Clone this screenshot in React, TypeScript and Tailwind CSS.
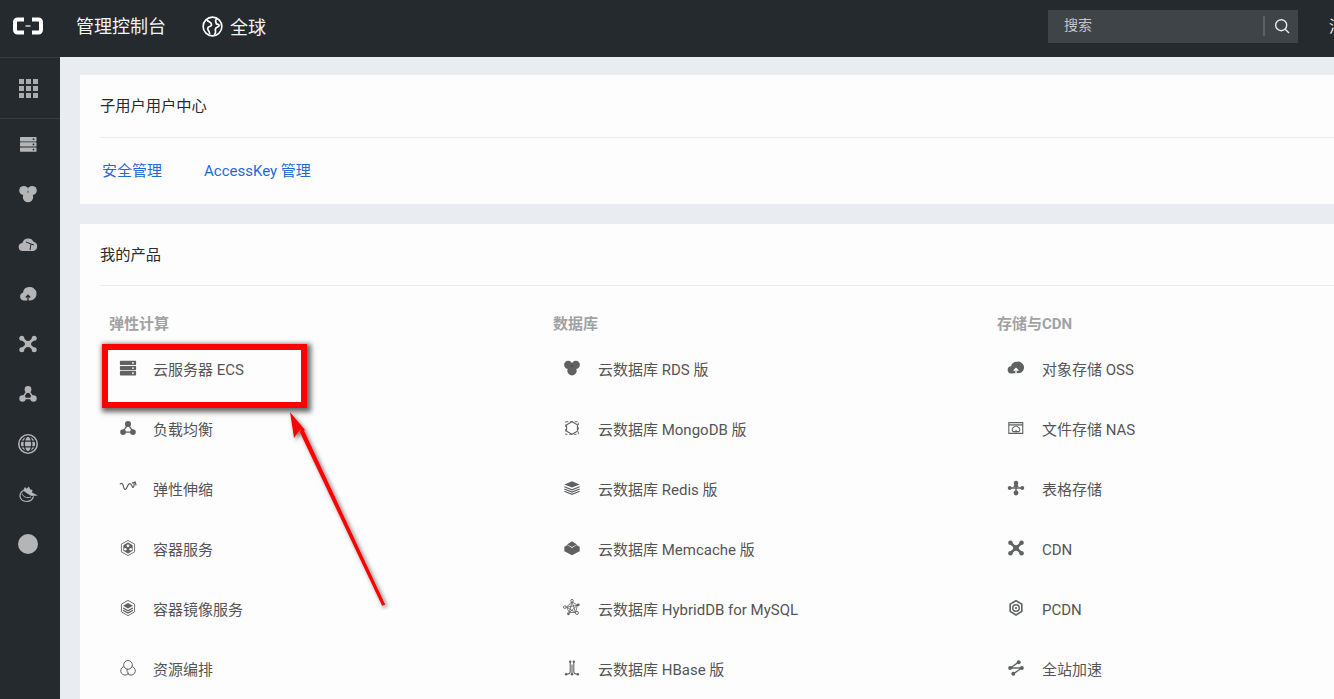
import type { ReactNode } from "react";

const font = { fontFamily: 'Roboto, "Noto Sans CJK SC", sans-serif' };

function Ico({ children, className = "w-[20px] h-[20px]" }: { children: ReactNode; className?: string }) {
    return (
        <svg viewBox="0 0 20 20" className={className} fill="currentColor">
            {children}
        </svg>
    );
}

const Server = () => (
    <>
        <rect x="1" y="2" width="18" height="4.800" rx="0.800" />
        <rect x="1" y="7.700" width="18" height="4.800" rx="0.800" />
        <rect x="1" y="13.400" width="18" height="4.800" rx="0.800" />
        <circle cx="15.500" cy="4.400" r="1" fill="#fff" />
        <circle cx="15.500" cy="10.100" r="1" fill="#fff" />
        <circle cx="15.500" cy="15.800" r="1" fill="#fff" />
    </>
);
const ServerDark = () => (
    <>
        <rect x="2" y="3" width="16.500" height="4.400" rx="0.600" />
        <rect x="2" y="8.200" width="16.500" height="4.400" rx="0.600" />
        <rect x="2" y="13.400" width="16.500" height="4.400" rx="0.600" />
        <circle cx="15.500" cy="5.200" r="0.900" fill="#252a2f" />
        <circle cx="15.500" cy="10.400" r="0.900" fill="#252a2f" />
        <circle cx="15.500" cy="15.600" r="0.900" fill="#252a2f" />
    </>
);
const Trefoil = () => (
    <>
        <circle cx="5.800" cy="6.500" r="4.600" />
        <circle cx="14.200" cy="6.500" r="4.600" />
        <circle cx="10" cy="13" r="5.200" />
        <path d="M10 6l1.200 2.500H8.800z" fill="#252a2f" opacity="0.500" />
    </>
);
const CloudNet = ({ hole = "#252a2f" }: { hole?: string }) => (
    <>
        <path d="M5 17a4 4 0 0 1-.6-8 6 6 0 0 1 11.200-1.200a4.700 4.700 0 0 1-.4 9.200z" />
        <path d="M8 8l5 2 3 1M13 10l-1 6" stroke={hole} strokeWidth="1" fill="none" />
    </>
);
const CloudUp = ({ hole = "#252a2f" }: { hole?: string }) => (
    <>
        <path d="M5.500 16.500a4 4 0 0 1-.5-7.800 6.500 6.500 0 0 1 6-5.700 6.500 6.500 0 0 1 1.500 13.500z" />
        <path d="M10 17v-5M7.800 13.500L10 11.200l2.200 2.300" stroke={hole} strokeWidth="1.300" fill="none" />
    </>
);
const Cross = () => (
    <>
        <path d="M4 4.500l12 11M16 4.500l-12 11" stroke="currentColor" strokeWidth="2.800" />
        <circle cx="3.800" cy="4.300" r="2.500" />
        <circle cx="16.200" cy="4.300" r="2.500" />
        <circle cx="3.800" cy="15.700" r="2.500" />
        <circle cx="16.200" cy="15.700" r="2.500" />
        <circle cx="10" cy="10" r="3.200" />
    </>
);
const Balance = () => (
    <>
        <path d="M10 6L4 14.500h12z" fill="none" stroke="currentColor" strokeWidth="1.500" />
        <circle cx="10" cy="5.500" r="3.400" />
        <circle cx="4.500" cy="14.500" r="3.200" />
        <circle cx="15.500" cy="14.500" r="3.200" />
    </>
);
const Globe = () => (
    <>
        <circle cx="10" cy="10" r="10" />
        <g fill="none" stroke="#252a2f" strokeWidth="1.300">
            <circle cx="10" cy="10" r="7.800" />
            <ellipse cx="10" cy="10" rx="3.800" ry="7.800" />
            <path d="M2.500 7.200h15M2.500 12.800h15" />
        </g>
    </>
);
const Bird = () => (
    <g>
        <path d="M15.500 12.500c-1 3.500-4 5-7 5-4 0-6.500-2.500-6.500-5.500 0-2.500 1.500-4.500 3.500-5.500" fill="none" stroke="currentColor" strokeWidth="1.200" />
        <path d="M4 9.500c1 3.500 5 5 9 3.500" fill="none" stroke="currentColor" strokeWidth="1" />
        <path d="M5 6.500L7 3l1.500 1.800L11 2.500l1 2.800L14.500 6l-.5 2.500 6 3-6.500.500-3.500-2z" />
    </g>
);
const Scale = () => (
    <path
        d="M1 6c2.500-2.500 3.500 0 4 2.500s2 4.500 3.500 1.500S11 4 13 5.500s1.500 5 3 3.500.5-4 1-4.500M14.500 4.500l3.500-1 1 3.500"
        fill="none"
        stroke="currentColor"
        strokeWidth="1.400"
    />
);
const Hexagon = ({ children }: { children: ReactNode }) => (
    <>
        <path d="M10 1.500l7.300 4.200v8.600L10 18.500l-7.300-4.200V5.700z" fill="none" stroke="currentColor" strokeWidth="1" />
        {children}
    </>
);
const Box = () => (
    <Hexagon>
        <path d="M10 4l5.200 3v6L10 16l-5.200-3V7z" />
        <circle cx="10" cy="7.500" r="1.500" fill="#fff" />
        <circle cx="7" cy="11.500" r="1.400" fill="#fff" />
        <circle cx="13" cy="11.500" r="1.400" fill="#fff" />
    </Hexagon>
);
const BoxStack = () => (
    <Hexagon>
        <path d="M10 4.500l5.500 3L10 10.500l-5.500-3z" />
        <path d="M4.500 10L10 13l5.500-3M4.500 12.500l5.500 3 5.500-3" fill="none" stroke="currentColor" strokeWidth="1.400" />
    </Hexagon>
);
const Rings = () => (
    <g fill="none" stroke="currentColor" strokeWidth="1.100">
        <circle cx="10" cy="6.500" r="4.800" />
        <path d="M5.300 8.500a4.800 4.800 0 1 0 5.200 7.500 5 5 0 0 1-1.500-5" />
        <path d="M14.700 8.500a4.800 4.800 0 1 1-5.200 7.500" />
    </g>
);
const Mongo = () => (
    <>
        <path d="M3 3h14v14H3z" fill="none" stroke="currentColor" strokeWidth="1" strokeDasharray="3 2" />
        <path d="M10 3l6 3.500v7L10 17l-6-3.500v-7z" fill="#fdfdfe" stroke="currentColor" strokeWidth="1.200" />
    </>
);
const Layers = () => (
    <>
        <path d="M10 2.500l8.500 3.500L10 9.500 1.500 6z" />
        <path
            d="M1.500 8.500l8.500 3.500 8.500-3.500M1.500 11l8.500 3.500 8.500-3.500M1.500 13.500L10 17l8.500-3.500"
            fill="none"
            stroke="currentColor"
            strokeWidth="1.200"
        />
    </>
);
const Memcache = () => (
    <>
        <path d="M10 2.500l5.500 3.500L10 9 4.500 6z" />
        <path d="M1.500 8.500L5 6.800 10 10l5-3.200 3.500 1.700v5L10 18l-8.500-4.500z" />
    </>
);
const Hybrid = () => (
    <g>
        <path d="M10 3l6 4-2 8-7 0-3-6zM7 15l3-12 4 12L4 9l12-2z" fill="none" stroke="currentColor" strokeWidth="0.900" />
        <circle cx="10" cy="2" r="1.500" fill="#fdfdfe" stroke="currentColor" />
        <circle cx="17" cy="6.500" r="1.600" />
        <circle cx="15.500" cy="15.500" r="1.700" fill="#fdfdfe" stroke="currentColor" />
        <circle cx="6" cy="16.500" r="1.500" />
        <circle cx="2" cy="9" r="1.500" fill="#fdfdfe" stroke="currentColor" />
    </g>
);
const HBase = () => (
    <g>
        <path
            d="M8 3v11c0 2-1.500 3-4 3M12 3v11c0 2 1.500 3 4 3M10 6v11"
            fill="none"
            stroke="currentColor"
            strokeWidth="1.200"
        />
        <circle cx="8" cy="3" r="1.300" />
        <circle cx="12" cy="3" r="1.300" />
        <circle cx="3.500" cy="17" r="1.400" />
        <circle cx="10" cy="17" r="1.400" />
        <circle cx="16.500" cy="17" r="1.400" />
    </g>
);
const Oss = () => (
    <>
        <path d="M5 16a4 4 0 0 1-.5-8 6.500 6.500 0 0 1 6.500-5 6.500 6.500 0 0 1 3.500 12.500z" />
        <path d="M10 16v-5M7.500 13L10 10.500 12.500 13" stroke="#fff" strokeWidth="1.500" fill="none" />
    </>
);
const Nas = () => (
    <>
        <path d="M2 4h15.500v12H2zM2 6.500h15.500" fill="none" stroke="currentColor" strokeWidth="1.200" />
        <path d="M7 14a2.500 2.500 0 0 1 .3-4.500 3 3 0 0 1 5.400 0A2.500 2.500 0 0 1 13 14z" fill="none" stroke="currentColor" strokeWidth="1.200" />
        <path d="M10 15v-3" stroke="currentColor" strokeWidth="1.200" />
    </>
);
const Table = () => (
    <>
        <path d="M10 4v12M3 10h14" stroke="currentColor" strokeWidth="1.500" />
        <path d="M10 3l3 6H7z" />
        <circle cx="10" cy="4.500" r="2.500" />
        <circle cx="3" cy="10" r="2.200" />
        <circle cx="17" cy="10" r="2.200" />
        <circle cx="10" cy="15.500" r="2.700" />
    </>
);
const Pcdn = () => (
    <>
        <path d="M10 2l6.500 3.700v8.100L10 17.800l-6.500-4V5.700z" fill="none" stroke="currentColor" strokeWidth="1.800" />
        <circle cx="10" cy="10" r="3.600" fill="none" stroke="currentColor" strokeWidth="1.600" />
        <circle cx="10" cy="10" r="1.200" />
    </>
);
const Site = () => (
    <>
        <path d="M13 3.500L3.500 10h13L7 16.500" fill="none" stroke="currentColor" strokeWidth="1.400" />
        <circle cx="13" cy="3.500" r="2.200" />
        <circle cx="3.500" cy="10" r="2.200" />
        <circle cx="16.500" cy="10" r="2.200" />
        <circle cx="7" cy="16.500" r="2.200" />
    </>
);

const columns: { title: string; labelGap: string; items: { icon: ReactNode; label: string }[] }[] = [
    {
        title: "弹性计算",
        labelGap: "ml-[16px]",
        items: [
            { icon: <Server />, label: "云服务器 ECS" },
            { icon: <Balance />, label: "负载均衡" },
            { icon: <Scale />, label: "弹性伸缩" },
            { icon: <Box />, label: "容器服务" },
            { icon: <BoxStack />, label: "容器镜像服务" },
            { icon: <Rings />, label: "资源编排" },
        ],
    },
    {
        title: "数据库",
        labelGap: "ml-[17px]",
        items: [
            { icon: <Trefoil />, label: "云数据库 RDS 版" },
            { icon: <Mongo />, label: "云数据库 MongoDB 版" },
            { icon: <Layers />, label: "云数据库 Redis 版" },
            { icon: <Memcache />, label: "云数据库 Memcache 版" },
            { icon: <Hybrid />, label: "云数据库 HybridDB for MySQL" },
            { icon: <HBase />, label: "云数据库 HBase 版" },
        ],
    },
    {
        title: "存储与CDN",
        labelGap: "ml-[17px]",
        items: [
            { icon: <Oss />, label: "对象存储 OSS" },
            { icon: <Nas />, label: "文件存储 NAS" },
            { icon: <Table />, label: "表格存储" },
            { icon: <Cross />, label: "CDN" },
            { icon: <Pcdn />, label: "PCDN" },
            { icon: <Site />, label: "全站加速" },
        ],
    },
];

const sideIcons = [
    <ServerDark key="a" />,
    <Trefoil key="b" />,
    <CloudNet key="c" />,
    <CloudUp key="d" />,
    <Cross key="e" />,
    <Balance key="f" />,
    <Globe key="g" />,
    <Bird key="h" />,
    <circle key="i" cx="10" cy="10" r="10" />,
];

export default function App() {
    return (
        <div className="relative w-[1334px] h-[699px] overflow-hidden bg-[#e9ecf0] flex flex-col" style={font}>
            {/* top bar */}
            <header className="h-[57px] shrink-0 bg-[#252a2f] flex items-center pb-[5px] text-white">
                <svg viewBox="0 0 30 18" className="w-[30px] h-[18px] ml-[13px]" fill="none">
                    <path d="M11 2.500H4.500a2.500 2.500 0 0 0-2.500 2.500v8a2.500 2.500 0 0 0 2.500 2.500H11" stroke="#fff" strokeWidth="4" />
                    <path d="M19 2.500h6.500a2.500 2.500 0 0 1 2.500 2.500v8a2.500 2.500 0 0 1-2.500 2.500H19" stroke="#fff" strokeWidth="4" />
                    <path d="M12.500 9h5" stroke="#fff" strokeWidth="1.200" />
                </svg>
                <span className="ml-[33px] text-[18px] text-[#f2f3f4]">管理控制台</span>
                <svg viewBox="0 0 22 22" className="ml-[36px] w-[21px] h-[21px]" fill="none" stroke="#fff">
                    <circle cx="11" cy="11" r="9.800" strokeWidth="1.700" />
                    <path d="M5 4c2 3 5 2 5 5s-4 1-4 4 2 2 2 6M15 3c-2 3 0 4 0 5s3 0 3 2-4 1-4 4 1 3-1 6" strokeWidth="1.800" />
                </svg>
                <span className="ml-[7px] mt-[2px] text-[18px] text-[#f2f3f4]">全球</span>
                <div className="ml-auto mr-[36px] w-[250px] h-[33px] bg-[#3f4448] flex items-center">
                    <span className="ml-[16px] pb-[1px] text-[14px] text-[#c4c6c8]">搜索</span>
                    <div className="ml-auto h-[20px] w-[2px] bg-[#5d6164]" />
                    <svg viewBox="0 0 16 16" className="ml-[9px] mr-[8px] w-[16px] h-[16px]" fill="none" stroke="#e8e9ea" strokeWidth="1.400">
                        <circle cx="7.200" cy="7.200" r="5.500" />
                        <path d="M11.200 11.200l3.800 3.800" />
                    </svg>
                </div>
                <span className="absolute left-[1329px] top-[15px] text-[16px] text-[#f2f3f4]">消</span>
            </header>

            <div className="flex flex-1 min-h-0">
                {/* left rail */}
                <aside className="w-[60px] shrink-0 bg-[#252a2f] text-[#b4b5b6] flex flex-col border-t border-[#383c41]">
                    <div className="h-[61px] w-full flex items-center justify-center pr-[4px] border-b border-[#383c41] shrink-0">
                        <div className="grid grid-cols-3 gap-[2px]">
                            {Array.from({ length: 9 }).map((_, i) => (
                                <div key={i} className="w-[5px] h-[5px] bg-[#a9abac]" />
                            ))}
                        </div>
                    </div>
                    {sideIcons.map((icon, i) => (
                        <div key={i} className="h-[50px] w-full shrink-0 flex items-center justify-center pr-[4px]">
                            <Ico>{icon}</Ico>
                        </div>
                    ))}
                </aside>

                {/* content */}
                <main className="flex-1 min-w-0 pl-[20px] pt-[18px] flex flex-col gap-[20px]">
                    <section className="h-[129px] shrink-0 bg-[#fdfdfe] pl-[20px]">
                        <div className="h-[63px] flex items-center border-b border-[#e9ebee] text-[15.250px] text-[#2a2a2a]">
                            子用户用户中心
                        </div>
                        <div className="h-[66px] flex items-center pl-[2px] text-[15px] text-[#1f6ad8]">
                            <span>安全管理</span>
                            <span className="ml-[42px]">AccessKey 管理</span>
                        </div>
                    </section>

                    <section className="flex-1 bg-[#fdfdfe] pl-[20px]">
                        <div className="h-[62px] flex items-center pt-[2px] border-b border-[#e9ebee] text-[15.250px] text-[#2a2a2a]">
                            我的产品
                        </div>
                        <div className="flex">
                            {columns.map((col) => (
                                <div key={col.title} className="w-[444px] shrink-0 pl-[9px]">
                                    <h3 className="h-[53px] pt-[28px] leading-[20px] text-[15px] font-bold text-[#a0a2a4]">{col.title}</h3>
                                    <ul>
                                        {col.items.map((item) => (
                                            <li key={item.label} className="h-[60px] flex items-center text-[15px] text-[#555]">
                                                <span className="ml-[10px] -mt-[3px] w-[18px] h-[18px] shrink-0 text-[#5f6163]">
                                                    <Ico className="w-[18px] h-[18px]">{item.icon}</Ico>
                                                </span>
                                                <span className={`${col.labelGap} mt-[2px]`}>{item.label}</span>
                                            </li>
                                        ))}
                                    </ul>
                                </div>
                            ))}
                        </div>
                    </section>
                </main>
            </div>

            {/* red annotation */}
            <div className="absolute left-[102px] top-[344px] w-[205px] h-[64px] border-[6px] border-[#ff0000] shadow-[2px_2px_5px_2px_rgba(0,0,0,0.6)]" />
            <svg className="absolute left-[280px] top-[405px] w-[110px] h-[205px]" viewBox="0 0 110 205" fill="#ff0000">
                <defs>
                    <filter id="arrowShadow" x="-30%" y="-10%" width="160%" height="120%">
                        <feDropShadow dx="2" dy="2" stdDeviation="2" floodColor="#000" floodOpacity="0.550" />
                    </filter>
                </defs>
                <g filter="url(#arrowShadow)">
                    <path d="M10 7L14 33l6-8 2.500 2L103 200.500l2-1L24 25.500l1-.5z" />
                    <path d="M21 26l82.500 174" stroke="#ff0000" strokeWidth="3" fill="none" />
                </g>
            </svg>
        </div>
    );
}
